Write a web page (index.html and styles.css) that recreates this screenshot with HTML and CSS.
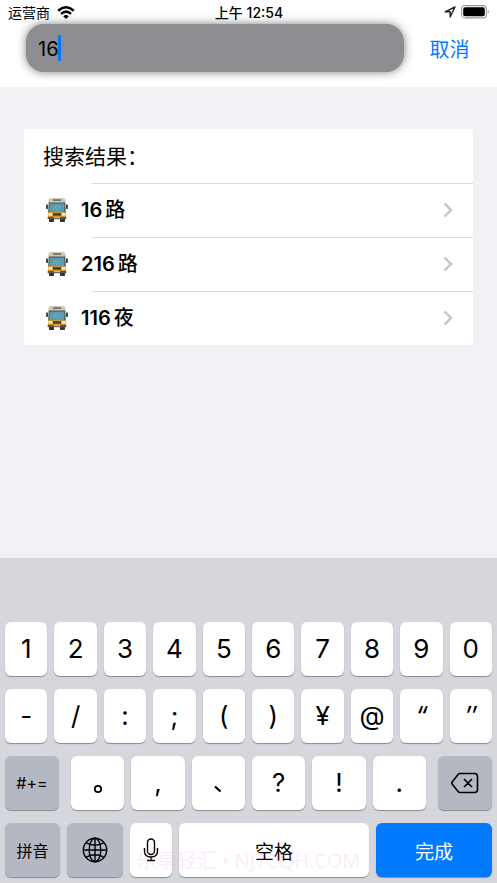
FILE: index.html
```html
<!DOCTYPE html>
<html lang="zh-CN">
<head>
<meta charset="utf-8">
<meta name="viewport" content="width=device-width, initial-scale=1">
<title>搜索结果</title>
<link rel="stylesheet" href="styles.css">
</head>
<body>
<svg class="sprite" aria-hidden="true">
  <symbol id="bus" viewBox="0 0 22 24">
    <path d="M3 19h5v4.300q0 .7-.7.7H3.700Q3 24 3 23.300zM14 19h5v4.300q0 .7-.7.7h-3.600q-.7 0-.7-.7z" fill="#36312f"/>
    <path d="M0 7.500q0-1 1-1h1.500v1H2V11H.8Q0 11 0 10zM22 7.500q0-1-1-1h-1.500v1h.5V11h1.200q.8 0 .8-1z" fill="#454443"/>
    <path d="M2.500 2Q3 0 5 0h12q2 0 2.500 2l.5 3.500V15H2V5.500z" fill="#cfc8b4"/>
    <path d="M7 1.200h8v1.800H7z" fill="#77756e"/>
    <path d="M3 4.500h16l.7 10H2.300z" fill="#3b535b"/>
    <path d="M3.600 5.500h14.800v8.500H3.200z" fill="#5b9bb0"/>
    <path d="M7 12l4-5M10 13l4-5" stroke="#87b9c7" stroke-width=".7"/>
    <path d="M2 14.500h18v5H2z" fill="#f1a51f"/>
    <path d="M7 15.200h8v2.500H7z" fill="#4b3a21"/>
    <path d="M2.500 15.200h3.500v2.200H2.500zM16 15.200h3.500v2.200H16z" fill="#fff1c7"/>
    <path d="M1.700 18.800h18.600v2.400H1.700z" fill="#5b5550"/>
    <path d="M8 19h6v1.200H8z" fill="#c2b9a8"/>
  </symbol>
  <symbol id="chevron" viewBox="0 0 10 16">
    <path d="M1.500 1.500L8 8l-6.500 6.500" fill="none" stroke="#c4c4c7" stroke-width="2.400"/>
  </symbol>
</svg>
<div class="screen">
  <header class="top">
    <div class="status">
      <div class="status-left">
        <span>运营商</span>
        <svg class="wifi" viewBox="0 0 18 13" aria-hidden="true">
          <path d="M1.200 4.800Q9-2.200 16.800 4.800M4 7.900q5-4.500 10 0" fill="none" stroke="#000" stroke-width="2.500"/>
          <path d="M6.200 10.200Q9 8 11.800 10.200L9 13z"/>
        </svg>
      </div>
      <div class="status-time">上午 12:54</div>
      <div class="status-right">
        <svg class="location" viewBox="0 0 12 12" aria-hidden="true">
          <path d="M1 5.800L11 1 6.200 11V5.800z" fill="none" stroke="#222" stroke-width="1.400" stroke-linejoin="round"/>
        </svg>
        <svg class="battery" viewBox="0 0 29 14" aria-hidden="true">
          <rect x=".6" y=".6" width="24.800" height="12.300" rx="3.500" fill="none" stroke="#999" stroke-width="1.100"/>
          <rect x="2.200" y="2.200" width="21.600" height="9.100" rx="2"/>
          <path d="M26.800 4.500q2 2.200 0 4.500z" fill="#999"/>
        </svg>
      </div>
    </div>
    <form class="search">
      <div class="field">
        <input class="field-input" type="text" value="16" aria-label="搜索">
        <span class="caret"></span>
      </div>
      <button class="cancel" type="button">取消</button>
    </form>
  </header>

  <main class="results">
    <h1 class="results-title">搜索结果：</h1>
    <a class="result" href="#"><svg class="bus" aria-hidden="true"><use href="#bus"/></svg><span class="route">16<span class="unit">路</span></span><svg class="chevron" aria-hidden="true"><use href="#chevron"/></svg></a>
    <a class="result" href="#"><svg class="bus" aria-hidden="true"><use href="#bus"/></svg><span class="route">216<span class="unit">路</span></span><svg class="chevron" aria-hidden="true"><use href="#chevron"/></svg></a>
    <a class="result" href="#"><svg class="bus" aria-hidden="true"><use href="#bus"/></svg><span class="route">116<span class="unit">夜</span></span><svg class="chevron" aria-hidden="true"><use href="#chevron"/></svg></a>
  </main>

  <section class="keyboard" aria-label="键盘">
    <div class="keys keys-ten">
      <button class="key">1</button><button class="key">2</button><button class="key">3</button><button class="key">4</button><button class="key">5</button><button class="key">6</button><button class="key">7</button><button class="key">8</button><button class="key">9</button><button class="key">0</button>
    </div>
    <div class="keys keys-ten">
      <button class="key">-</button><button class="key">/</button><button class="key">:</button><button class="key">;</button><button class="key">(</button><button class="key">)</button><button class="key">¥</button><button class="key">@</button><button class="key key-quote">“</button><button class="key key-quote">″</button>
    </div>
    <div class="keys keys-marks">
      <button class="key key-dark key-symbols">#+=</button>
      <div class="marks">
        <button class="key" aria-label="。"><svg class="mark" viewBox="0 0 28 28" aria-hidden="true"><circle cx="14" cy="21" r="3.200" fill="none" stroke="#000" stroke-width="1.800"/></svg></button>
        <button class="key">,</button>
        <button class="key" aria-label="、"><svg class="mark" viewBox="0 0 28 28" aria-hidden="true"><path d="M11 18.500l5.500 5" stroke="#000" stroke-width="2.300"/></svg></button>
        <button class="key">?</button>
        <button class="key">!</button>
        <button class="key">.</button>
      </div>
      <button class="key key-dark" aria-label="删除">
        <svg class="delete" viewBox="0 0 28 22" aria-hidden="true"><path d="M9 1.500h14.500q3 0 3 3v13q0 3-3 3H9q-1 0-1.700-.7L1.500 12.500q-1.200-1.500 0-3L7.300 2.200Q8 1.500 9 1.500zM13 7l8 8M21 7l-8 8" fill="none" stroke="#000" stroke-width="1.600" stroke-linejoin="round"/></svg>
      </button>
    </div>
    <div class="keys keys-bottom">
      <button class="key key-dark key-mode">拼音</button>
      <button class="key key-dark" aria-label="切换键盘">
        <svg class="globe" viewBox="0 0 26 26" aria-hidden="true"><g fill="none" stroke="#000" stroke-width="1.400"><circle cx="13" cy="13" r="11.700"/><ellipse cx="13" cy="13" rx="5.800" ry="11.700"/><path d="M13 1.500v23M1.500 13h23M4.300 5.800q8.700 4.800 17.400 0M4.300 20.200q8.700-4.800 17.400 0"/></g></svg>
      </button>
      <button class="key key-mic" aria-label="听写">
        <svg class="mic" viewBox="0 0 16 24" aria-hidden="true"><g fill="none" stroke="#000" stroke-width="1.400"><rect x="4.500" y="1" width="7" height="15.500" rx="3.500"/><path d="M1.500 10v3q0 6 6.500 6t6.500-6v-3M8 19v3.500M4 22.500h8"/></g></svg>
      </button>
      <button class="key key-word">空格</button>
      <button class="key key-done key-word">完成</button>
    </div>
    <div class="watermark">乐享轻汇 • NJTCQH.COM</div>
  </section>
</div>
</body>
</html>
```

FILE: styles.css
```css
* {
  box-sizing: border-box;
}

body {
  margin: 0;
  background: #f2f1f6;
  color: #000;
  font-family: Inter, "Noto Sans CJK SC", sans-serif;
}

button,
input {
  margin: 0;
  padding: 0;
  border: 0;
  background: none;
  color: inherit;
  font: inherit;
}

.sprite {
  position: absolute;
  width: 0;
  height: 0;
}

.screen {
  display: flex;
  flex-direction: column;
  min-height: 100vh;
}

.top {
  padding-bottom: 15px;
  background: #fff;
}

.status {
  display: grid;
  grid-template-columns: 1fr auto 1fr;
  align-items: center;
  height: 24px;
  padding: 0 7px 0 8px;
  font-size: 14px;
}

.status-left,
.status-right {
  display: flex;
  align-items: center;
  gap: 7px;
}

.status-right {
  justify-content: flex-end;
  gap: 5px;
}

.status-time {
  font-weight: 500;
}

.wifi {
  width: 18px;
  height: 13px;
}

.location {
  width: 12px;
  height: 12px;
}

.battery {
  width: 29px;
  height: 14px;
}

.search {
  display: flex;
  padding-left: 26px;
}

.field {
  position: relative;
  flex: 1;
  height: 48px;
  border-radius: 18px;
  background: #8e8d92;
  box-shadow: 0 0 10px rgba(0, 0, 0, 0.5);
}

.field-input {
  width: 100%;
  height: 100%;
  padding: 2px 12px 0;
  border-radius: 18px;
  font-size: 20px;
  outline: 0;
}

.caret {
  position: absolute;
  top: 11px;
  left: 32px;
  width: 3px;
  height: 26px;
  border-radius: 1px;
  background: #007aff;
}

.cancel {
  width: 93px;
  padding-right: 2px;
  color: #007aff;
  font-size: 20px;
}

.results {
  margin: 42px 24px;
  background: #fff;
}

.results-title {
  margin: 0;
  padding: 2px 0 0 19px;
  font-size: 21px;
  font-weight: 400;
  line-height: 52px;
}

.result {
  display: flex;
  align-items: center;
  height: 54px;
  padding: 0 20px 0 22px;
  background: linear-gradient(#dcdcde, #dcdcde) 68px 0 / 100% 1px no-repeat;
  color: inherit;
  text-decoration: none;
}

.bus {
  width: 22px;
  height: 24px;
}

.route {
  flex: 1;
  margin-left: 13px;
  font-size: 20px;
  font-weight: 600;
  line-height: 26px;
}

.unit {
  margin-left: 3px;
  font-weight: 500;
}

.chevron {
  width: 10px;
  height: 16px;
}

.keyboard {
  position: relative;
  display: flex;
  flex-direction: column;
  gap: 13px;
  margin-top: auto;
  padding: 64px 5px 6px;
  background: #d6d7dd;
}

.keys {
  display: grid;
  gap: 7px;
}

.keys-ten {
  grid-template-columns: repeat(10, 1fr);
}

.keys-marks {
  grid-template-columns: 54fr 355fr 54fr;
  gap: 12px;
}

.marks {
  display: grid;
  grid-template-columns: repeat(6, 1fr);
  gap: 7px;
}

.keys-bottom {
  grid-template-columns: 55fr 56fr 42fr 190fr 116fr;
}

.key {
  display: flex;
  align-items: center;
  justify-content: center;
  min-width: 0;
  height: 54px;
  padding-bottom: 2px;
  border-radius: 6px;
  background: #fff;
  box-shadow: 0 1px 1px #898a8d;
  font-size: 26px;
}

.key-dark {
  padding: 0;
  background: #b3b8c2;
}

.key-done {
  background: #007aff;
  color: #fff;
}

.key-symbols,
.key-mode {
  font-size: 16px;
}

.key-mic,
.key-word {
  padding: 0;
}

.key-word {
  font-size: 19px;
}

.key-quote {
  font-style: italic;
}

.mark {
  width: 28px;
  height: 28px;
}

.delete {
  width: 28px;
  height: 22px;
}

.globe {
  width: 26px;
  height: 26px;
}

.mic {
  width: 16px;
  height: 24px;
}

.watermark {
  position: absolute;
  right: 0;
  bottom: 7px;
  left: 0;
  color: rgba(240, 150, 230, 0.2);
  font-family: "Open Sans", "Noto Sans CJK SC", sans-serif;
  font-size: 20px;
  line-height: 30px;
  text-align: center;
  pointer-events: none;
}
```
